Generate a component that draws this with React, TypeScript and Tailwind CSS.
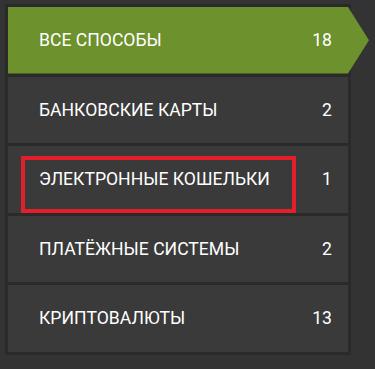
import React from 'react';

const items = [
  { label: 'Все способы', count: 18, active: true },
  { label: 'Банковские карты', count: 2 },
  { label: 'Электронные кошельки', count: 1, marked: true },
  { label: 'Платёжные системы', count: 2 },
  { label: 'Криптовалюты', count: 13 },
];

export default function App() {
  return (
    <div className="relative h-[369px] w-[375px] overflow-hidden bg-[#333333] pl-[5px] pt-[4px] font-['Roboto','Liberation_Sans',sans-serif]">
      <div className="flex w-[346px] flex-col gap-[3px] border-[3px] border-[#2a2a2a] bg-[#2a2a2a]">
        {items.map(item =>
          item.active ? (
            <div
              key={item.label}
              className="relative z-10 flex h-[66.6px] w-[361px] items-center bg-[#6d912c] pl-[31px] pr-[37px] text-[17.6px] uppercase text-white [clip-path:polygon(0_0,340px_0,100%_50%,340px_100%,0_100%)]"
            >
              <span className="flex-1">{item.label}</span>
              <span>{item.count}</span>
            </div>
          ) : (
            <div
              key={item.label}
              className="relative flex h-[66.6px] items-center bg-[#3a3a3a] pl-[31px] pr-[16px] text-[17.6px] uppercase text-white"
            >
              <span className="flex-1">{item.label}</span>
              <span>{item.count}</span>
              {item.marked && (
                <div className="pointer-events-none absolute left-[13px] top-[10px] h-[57px] w-[275px] border-[4px] border-[#e3202a]" />
              )}
            </div>
          ),
        )}
      </div>
    </div>
  );
}
